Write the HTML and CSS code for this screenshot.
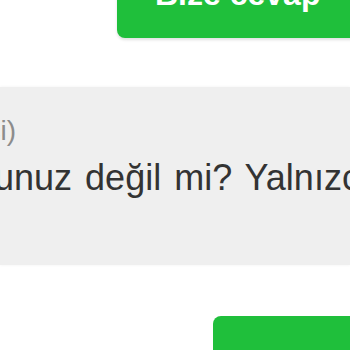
FILE: index.html
```html
<!DOCTYPE html>
<html lang="tr">
<head>
<meta charset="utf-8">
<link rel="stylesheet" href="styles.css">
</head>
<body>
<div class="page">
  <div class="btn-row top-row">
    <a class="btn top-btn">Bize cevap</a>
  </div>
  <div class="panel">
    <div class="meta"><span>(Ziyaretçi)</span></div>
    <p class="msg">Sorunuz değil mi? Yalnızca üyelerimiz cevap verebilir.</p>
  </div>
  <div class="btn-row bottom-row">
    <a class="btn bottom-btn">Soru sor</a>
  </div>
</div>
</body>
</html>
```
FILE: styles.css
```css
html, body {
  margin: 0;
  padding: 0;
  background: #ffffff;
  overflow: hidden;
}
.page {
  width: 350px;
  height: 350px;
  overflow: hidden;
  font-family: "Liberation Sans", Arial, sans-serif;
}
.btn-row {
  display: flex;
}
.top-row {
  margin-top: -42px;
  padding-left: 117px;
}
.btn {
  display: block;
  flex: 1;
  box-sizing: border-box;
  background: #1fbf3b;
  color: #ffffff;
  font-weight: bold;
  font-size: 32px;
  line-height: 32px;
  white-space: nowrap;
  border-radius: 8px 0 0 8px;
  margin-right: -20px;
}
.top-btn {
  height: 80px;
  padding: 20px 0 0 38px;
  box-shadow: 0 2px 3px rgba(0, 0, 0, 0.12);
}
.panel {
  margin-top: 49px;
  height: 178px;
  box-sizing: border-box;
  padding-top: 28px;
  background: #efefef;
  overflow: hidden;
  box-shadow: 0 0 3px rgba(0, 0, 0, 0.06);
}
.meta {
  display: flex;
  justify-content: flex-end;
  width: 16px;
  font-size: 28px;
  line-height: 32px;
  color: #8c8c8c;
  white-space: nowrap;
}
.msg {
  margin: 6px 0 0 -62px;
  font-size: 36px;
  line-height: 50px;
  color: #333333;
  white-space: nowrap;
  word-spacing: 3px;
}
.bottom-row {
  margin-top: 51px;
  padding-left: 213px;
}
.bottom-btn {
  height: 70px;
  padding: 20px 0 0 30px;
  color: #1fbf3b;
}
```
